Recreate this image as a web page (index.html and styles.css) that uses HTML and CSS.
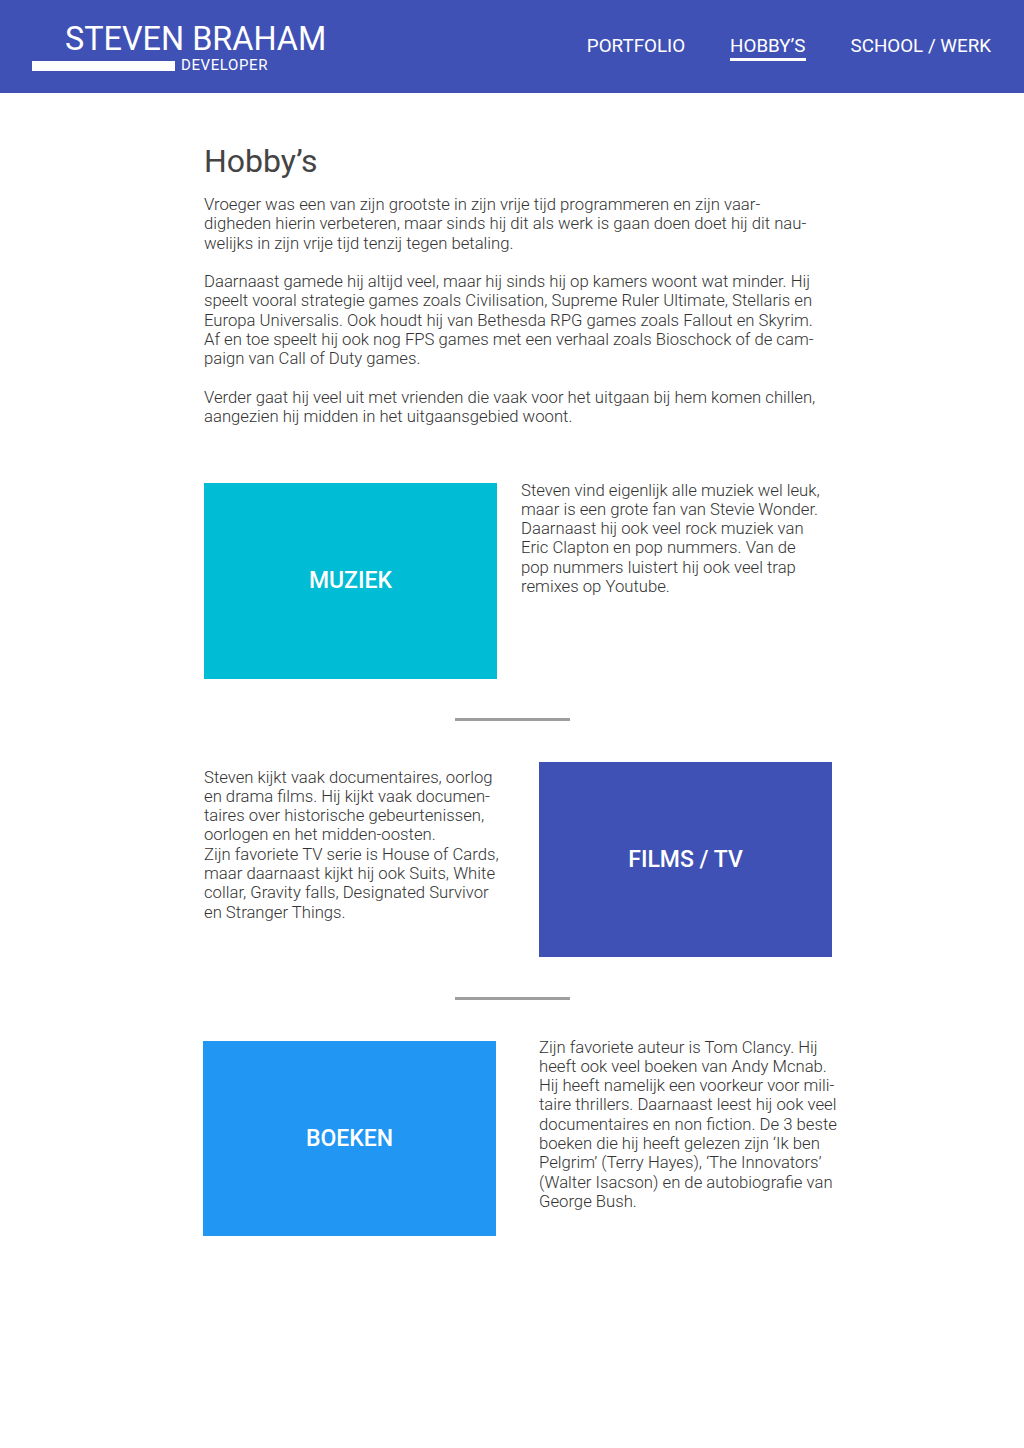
FILE: index.html
```html
<!DOCTYPE html>
<html lang="nl">
<head>
<meta charset="utf-8">
<title>Hobby's - Steven Braham</title>
<link rel="stylesheet" href="styles.css">
</head>
<body>
<header class="site-header">
  <div class="logo">
    <div class="logo-name">STEVEN BRAHAM</div>
    <div class="logo-sub">
      <span class="logo-bar"></span>
      <span class="logo-role">DEVELOPER</span>
    </div>
  </div>
  <nav class="nav">
    <a class="nav-link" href="#">PORTFOLIO</a>
    <a class="nav-link active" href="#">HOBBY’S</a>
    <a class="nav-link" href="#">SCHOOL / WERK</a>
  </nav>
</header>

<main class="content">
  <h1 class="title">Hobby’s</h1>
  <p class="text">Vroeger was een van zijn grootste in zijn vrije tijd programmeren en zijn vaar-<br>digheden hierin verbeteren, maar sinds hij dit als werk is gaan doen doet hij dit nau-<br>welijks in zijn vrije tijd tenzij tegen betaling.</p>
  <p class="text">Daarnaast gamede hij altijd veel, maar hij sinds hij op kamers woont wat minder. Hij<br>speelt vooral strategie games zoals Civilisation, Supreme Ruler Ultimate, Stellaris en<br>Europa Universalis. Ook houdt hij van Bethesda RPG games zoals Fallout en Skyrim.<br>Af en toe speelt hij ook nog FPS games met een verhaal zoals Bioschock of de cam-<br>paign van Call of Duty games.</p>
  <p class="text">Verder gaat hij veel uit met vrienden die vaak voor het uitgaan bij hem komen chillen,<br>aangezien hij midden in het uitgaansgebied woont.</p>

  <section class="hobby hobby-muziek">
    <div class="tile tile-cyan">MUZIEK</div>
    <p class="text hobby-text">Steven vind eigenlijk alle muziek wel leuk,<br>maar is een grote fan van Stevie Wonder.<br>Daarnaast hij ook veel rock muziek van<br>Eric Clapton en pop nummers. Van de<br>pop nummers luistert hij ook veel trap<br>remixes op Youtube.</p>
  </section>

  <hr class="divider divider-1">

  <section class="hobby hobby-films">
    <p class="text hobby-text">Steven kijkt vaak documentaires, oorlog<br>en drama films. Hij kijkt vaak documen-<br>taires over historische gebeurtenissen,<br>oorlogen en het midden-oosten.<br>Zijn favoriete TV serie is House of Cards,<br>maar daarnaast kijkt hij ook Suits, White<br>collar, Gravity falls, Designated Survivor<br>en Stranger Things.</p>
    <div class="tile tile-indigo">FILMS / TV</div>
  </section>

  <hr class="divider divider-2">

  <section class="hobby hobby-boeken">
    <div class="tile tile-blue">BOEKEN</div>
    <p class="text hobby-text">Zijn favoriete auteur is Tom Clancy. Hij<br>heeft ook veel boeken van Andy Mcnab.<br>Hij heeft namelijk een voorkeur voor mili-<br>taire thrillers. Daarnaast leest hij ook veel<br>documentaires en non fiction. De 3 beste<br>boeken die hij heeft gelezen zijn ‘Ik ben<br>Pelgrim’ (Terry Hayes), ‘The Innovators’<br>(Walter Isacson) en de autobiografie van<br>George Bush.</p>
  </section>
</main>
</body>
</html>
```

FILE: styles.css
```css
* {
  box-sizing: border-box;
}

body {
  margin: 0;
  background: #ffffff;
  font-family: Roboto, "Liberation Sans", Arial, sans-serif;
  color: #333333;
}

/* Header */
.site-header {
  height: 93px;
  background: #3f51b5;
  display: flex;
  justify-content: space-between;
  align-items: flex-start;
  padding: 0 33px 0 32px;
  color: #ffffff;
}

.logo {
  padding-top: 23px;
}

.logo-name {
  font-size: 32.4px;
  line-height: 32px;
  font-weight: 400;
  margin-left: 33px;
  white-space: nowrap;
}

.logo-sub {
  display: flex;
  align-items: flex-end;
  margin-top: 3px;
  height: 15px;
}

.logo-bar {
  display: block;
  width: 143px;
  height: 10px;
  background: #ffffff;
  margin-bottom: 2px;
}

.logo-role {
  margin-left: 6px;
  font-size: 15px;
  line-height: 15px;
  letter-spacing: 0.6px;
  font-weight: 400;
}

.nav {
  display: flex;
  padding-top: 37px;
}

.nav-link {
  color: #ffffff;
  text-decoration: none;
  font-size: 18.8px;
  line-height: 18px;
  padding-bottom: 3px;
  border-bottom: 3px solid transparent;
  margin-left: 45px;
  white-space: nowrap;
}

.nav-link.active {
  border-bottom-color: #ffffff;
}

/* Content */
.content {
  width: 616px;
  margin: 0 auto;
  padding-top: 49px;
  padding-bottom: 120px;
}

.title {
  margin: 0 0 15px 0;
  font-size: 32px;
  line-height: 38px;
  font-weight: 400;
  color: #444444;
}

.text {
  margin: 0 0 19.3px 0;
  font-size: 16.7px;
  line-height: 19.3px;
  font-weight: 300;
  color: #333333;
  white-space: nowrap;
}

.hobby {
  display: flex;
  align-items: flex-start;
}

.hobby .hobby-text {
  margin: 0;
  flex-shrink: 0;
}

.hobby-muziek {
  margin-top: 54px;
}

.hobby-muziek .tile {
  margin-top: 2px;
  margin-right: 24px;
}

.hobby-films .hobby-text {
  width: 335px;
  margin-top: 6px;
}

.hobby-films .tile {
  height: 195px;
}

.hobby-boeken .tile {
  margin-left: -1px;
  margin-top: 3px;
  margin-right: 43px;
  height: 195px;
}

.tile {
  flex: 0 0 293px;
  width: 293px;
  height: 196px;
  display: flex;
  align-items: center;
  justify-content: center;
  color: #ffffff;
  font-size: 23px;
  font-weight: 500;
}

.tile-cyan {
  background: #00bcd4;
}

.tile-indigo {
  background: #3f51b5;
}

.tile-blue {
  background: #2196f3;
}

.divider {
  display: block;
  width: 115px;
  height: 3px;
  border: 0;
  background: #9e9e9e;
  margin-left: auto;
  margin-right: auto;
}

.divider-1 {
  margin-top: 39px;
  margin-bottom: 41px;
}

.divider-2 {
  margin-top: 40px;
  margin-bottom: 38px;
}
```
